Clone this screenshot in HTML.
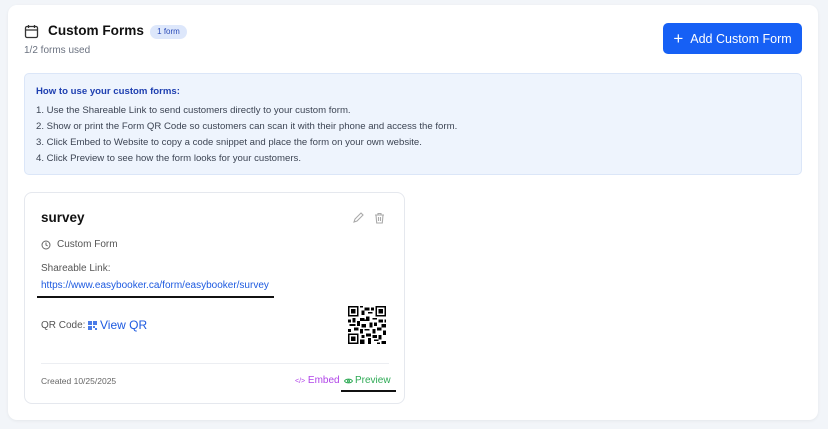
<!DOCTYPE html>
<html><head><meta charset="utf-8"><style>
*{margin:0;padding:0;box-sizing:border-box}
body{width:828px;height:429px;background:#f2f5f9;font-family:"Liberation Sans",sans-serif;position:relative;overflow:hidden}
.card{position:absolute;left:8px;top:5px;width:810px;height:415px;background:#fff;border-radius:9px;box-shadow:0 1px 3px rgba(0,0,0,.06)}
.abs{position:absolute}
.btn{left:655px;top:18px;width:139px;height:31px;background:#1660f5;border-radius:5px;color:#fff;font-size:12.5px;display:flex;align-items:center;justify-content:center;gap:7px}
.info{left:16px;top:68px;width:778px;height:102px;background:#eef4fd;border:1px solid #dbe6f8;border-radius:5px}
.info p{font-size:9.6px;color:#3c4453;position:absolute;left:11px}
.fc{left:16px;top:187px;width:381px;height:212px;border:1px solid #e5e8ee;border-radius:8px}
</style></head><body>
<div class="card">
 <svg class="abs" style="left:16px;top:19px" width="15" height="15" viewBox="0 0 15 15" fill="none" stroke="#333" stroke-width="1.3"><rect x="1.5" y="2.5" width="12" height="11" rx="1.5"/><path d="M1.5 6h12M4.5 1v3M10.5 1v3"/></svg>
 <div class="abs" style="left:40px;top:18px;font-size:13.6px;font-weight:bold;color:#111">Custom Forms</div>
 <div class="abs" style="left:142px;top:20px;width:37px;height:14px;background:#dde7fb;border-radius:7px;font-size:8px;color:#2a4bb8;text-align:center;line-height:14px">1 form</div>
 <div class="abs" style="left:16px;top:40px;font-size:10px;color:#6b7280">1/2 forms used</div>
 <div class="abs btn"><span style="font-size:17px;font-weight:300;line-height:1">+</span>Add Custom Form</div>
 <div class="abs info">
  <p style="top:12px;color:#1e3fb0;font-weight:bold">How to use your custom forms:</p>
  <p style="top:31px">1. Use the Shareable Link to send customers directly to your custom form.</p>
  <p style="top:47px">2. Show or print the Form QR Code so customers can scan it with their phone and access the form.</p>
  <p style="top:63px">3. Click Embed to Website to copy a code snippet and place the form on your own website.</p>
  <p style="top:79px">4. Click Preview to see how the form looks for your customers.</p>
 </div>
 <div class="abs fc">
  <div class="abs" style="left:16px;top:17px;font-size:13.5px;font-weight:bold;color:#111">survey</div>
  <svg class="abs" style="left:327px;top:19px" width="12" height="12" viewBox="0 0 12 12" fill="none" stroke="#aaa" stroke-width="1.1"><path d="M2 10l1-3 6-6 2 2-6 6z"/></svg>
  <svg class="abs" style="left:349px;top:19px" width="11" height="12" viewBox="0 0 11 12" fill="none" stroke="#aaa" stroke-width="1.1"><path d="M1 3h9M4 3V1.5h3V3M2 3l.7 8h5.6L9 3M4.5 5v4M6.5 5v4"/></svg>
  <svg class="abs" style="left:16px;top:47px" width="10" height="10" viewBox="0 0 10 10" fill="none" stroke="#666" stroke-width="1"><circle cx="5" cy="5" r="4"/><path d="M5 2.5V5l1.7 1"/></svg>
  <div class="abs" style="left:32px;top:46px;font-size:10px;color:#555">Custom Form</div>
  <div class="abs" style="left:16px;top:70px;font-size:10px;color:#555">Shareable Link:</div>
  <div class="abs" style="left:16px;top:87px;font-size:10px;color:#1d5ae0">https://www.easybooker.ca/form/easybooker/survey</div>
  <div class="abs" style="left:12px;top:103px;width:237px;height:2px;background:#111"></div>
  <div class="abs" style="left:16px;top:127px;font-size:10px;color:#555">QR Code:</div>
  <svg class="abs" style="left:63px;top:128px" width="9" height="9" viewBox="0 0 9 9" fill="#4a7be8"><rect x="0" y="0" width="4" height="4"/><rect x="5" y="0" width="4" height="4"/><rect x="0" y="5" width="4" height="4"/><rect x="5" y="5" width="2" height="2"/><rect x="7" y="7" width="2" height="2"/></svg>
  <div class="abs" style="left:75px;top:125px;font-size:12px;color:#1d5ae0">View QR</div>
  <svg class="abs" style="left:323px;top:113px" width="38" height="38" viewBox="0 0 25 25" shape-rendering="crispEdges">
   <g fill="#000">
   <path d="M0 0h7v7H0zM18 0h7v7h-7zM0 18h7v7H0z"/>
   </g>
   <g fill="#fff"><path d="M1 1h5v5H1zM19 1h5v5h-5zM1 19h5v5H1z"/></g>
   <g fill="#000"><path d="M2 2h3v3H2zM20 2h3v3h-3zM2 20h3v3H2z"/>
   <path d="M8 0h2v1H8zM11 1h3v2h-3zM9 3h2v3H9zM13 4h3v1h-3zM15 1h2v2h-2zM8 8h3v2H8zM12 7h2v3h-2zM16 8h3v1h-3zM20 9h3v2h-3zM0 9h2v2H0zM3 8h2v3H3zM1 12h4v1H1zM6 10h2v3H6zM9 12h3v2H9zM14 11h2v3h-2zM17 11h2v2h-2zM22 12h3v2h-3zM0 15h2v2H0zM4 14h3v2H4zM8 15h2v3H8zM11 15h3v1h-3zM16 15h2v3h-2zM19 14h3v2h-3zM23 16h2v3h-2zM9 19h2v2H9zM12 18h3v2h-3zM8 22h3v3H8zM13 21h2v4h-2zM16 19h3v2h-3zM20 19h2v3h-2zM17 22h3v1h-3zM22 23h3v2h-3zM19 24h2v1h-2zM11 9h1v1h-1zM24 9h1v2h-1z"/></g>
  </svg>
  <div class="abs" style="left:16px;top:170px;width:348px;height:1px;background:#eceef2"></div>
  <div class="abs" style="left:16px;top:183px;font-size:8.5px;color:#666">Created 10/25/2025</div>
  <div class="abs" style="left:270px;top:182px;font-size:10px;color:#b043e8"><span style="font-size:7px">&lt;/&gt;</span> Embed</div>
  <svg class="abs" style="left:319px;top:185px" width="9" height="6" viewBox="0 0 9 6" fill="none" stroke="#2eaa55" stroke-width="1"><path d="M.5 3C2 .5 7 .5 8.5 3 7 5.5 2 5.5.5 3z"/><circle cx="4.5" cy="3" r="1"/></svg>
  <div class="abs" style="left:330px;top:182px;font-size:10px;color:#2eaa55">Preview</div>
  <div class="abs" style="left:316px;top:197px;width:55px;height:2px;background:#111"></div>
 </div>
</div>
</body></html>
